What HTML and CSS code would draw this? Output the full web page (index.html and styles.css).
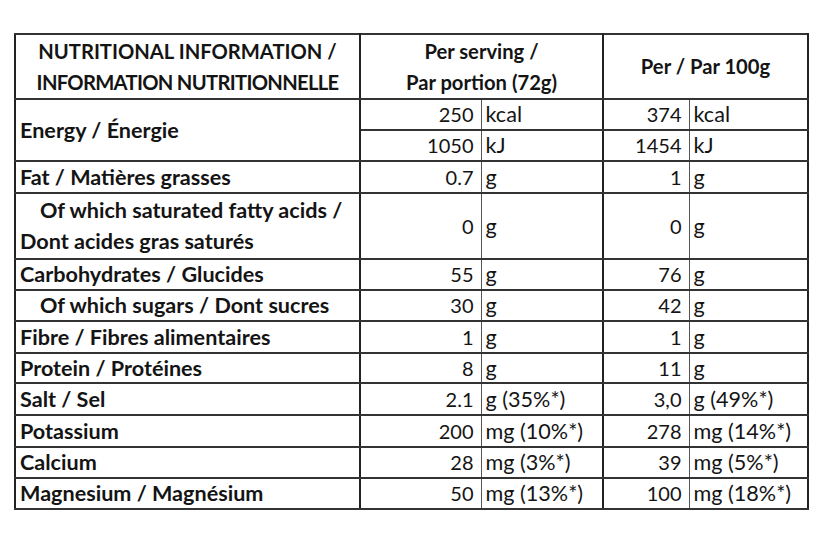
FILE: index.html
```html
<!DOCTYPE html>
<html lang="en">
<head>
<meta charset="utf-8">
<title>Nutritional information</title>
<link rel="stylesheet" href="styles.css">
</head>
<body>
<table class="nutri">
  <colgroup>
    <col class="c-label">
    <col class="c-val1">
    <col class="c-unit1">
    <col class="c-val2">
    <col class="c-unit2">
  </colgroup>
  <thead>
    <tr class="head">
      <th class="label-head">NUTRITIONAL INFORMATION /<br><span class="tight">INFORMATION NUTRITIONNELLE</span></th>
      <th colspan="2" class="grp">Per serving /<br>Par portion (72g)</th>
      <th colspan="2" class="grp">Per / Par 100g</th>
    </tr>
  </thead>
  <tbody>
    <tr><th rowspan="2" class="lab">Energy / Énergie</th><td class="v">250</td><td class="u">kcal</td><td class="v g2">374</td><td class="u">kcal</td></tr>
    <tr><td class="v">1050</td><td class="u">kJ</td><td class="v g2">1454</td><td class="u">kJ</td></tr>
    <tr class="tall"><th class="lab">Fat / Matières grasses</th><td class="v">0.7</td><td class="u">g</td><td class="v g2">1</td><td class="u">g</td></tr>
    <tr class="double"><th class="lab"><span class="indent">Of which saturated fatty acids /</span><br>Dont acides gras saturés</th><td class="v">0</td><td class="u">g</td><td class="v g2">0</td><td class="u">g</td></tr>
    <tr><th class="lab">Carbohydrates / Glucides</th><td class="v">55</td><td class="u">g</td><td class="v g2">76</td><td class="u">g</td></tr>
    <tr><th class="lab"><span class="indent">Of which sugars / Dont sucres</span></th><td class="v">30</td><td class="u">g</td><td class="v g2">42</td><td class="u">g</td></tr>
    <tr class="tall"><th class="lab">Fibre / Fibres alimentaires</th><td class="v">1</td><td class="u">g</td><td class="v g2">1</td><td class="u">g</td></tr>
    <tr class="short"><th class="lab">Protein / Protéines</th><td class="v">8</td><td class="u">g</td><td class="v g2">11</td><td class="u">g</td></tr>
    <tr class="tall"><th class="lab">Salt / Sel</th><td class="v">2.1</td><td class="u">g (35%*)</td><td class="v g2">3,0</td><td class="u">g (49%*)</td></tr>
    <tr class="tall"><th class="lab">Potassium</th><td class="v">200</td><td class="u">mg (10%*)</td><td class="v g2">278</td><td class="u">mg (14%*)</td></tr>
    <tr><th class="lab">Calcium</th><td class="v">28</td><td class="u">mg (3%*)</td><td class="v g2">39</td><td class="u">mg (5%*)</td></tr>
    <tr><th class="lab">Magnesium / Magnésium</th><td class="v">50</td><td class="u">mg (13%*)</td><td class="v g2">100</td><td class="u">mg (18%*)</td></tr>
  </tbody>
</table>
</body>
</html>
```
FILE: styles.css
```css
html, body {
  margin: 0;
  padding: 0;
  background: #ffffff;
}

body {
  font-family: Lato, "Open Sans", "DejaVu Sans", sans-serif;
  color: #141414;
  padding: 33px 0 0 14px;
}

.nutri {
  border-collapse: collapse;
  table-layout: fixed;
  width: 793px;
  border: 2px solid #222;
  font-size: 21.6px;
  line-height: 27px;
}

.c-label { width: 345px; }
.c-val1 { width: 121px; }
.c-unit1 { width: 122px; }
.c-val2 { width: 86px; }
.c-unit2 { width: 119px; }

.nutri th,
.nutri td {
  padding: 0;
  border-top: 2px solid #333;
  border-bottom: 2px solid #333;
  vertical-align: middle;
  white-space: nowrap;
  height: 29px;
}

.nutri .head th {
  height: 63px;
  line-height: 31px;
  text-align: center;
  font-weight: 700;
  font-size: 20.2px;
  border-right: 2px solid #222;
}

.tight {
  letter-spacing: -0.7px;
}

.nutri .grp {
  border-left: 2px solid #222;
}

.nutri .lab {
  text-align: left;
  font-weight: 700;
  padding-left: 4px;
  border-right: 2px solid #222;
}

.indent {
  padding-left: 20px;
}

.nutri .v {
  text-align: right;
  padding-right: 7px;
  font-size: 20px;
  border-right: 1px solid #555;
}

.nutri .g2 {
  border-left: 2px solid #222;
}

.nutri .u {
  text-align: left;
  padding-left: 4px;
}

.nutri .tall th, .nutri .tall td { height: 30px; }
.nutri .short th, .nutri .short td { height: 28px; }
.nutri .double th, .nutri .double td { height: 64px; line-height: 31px; }
```
